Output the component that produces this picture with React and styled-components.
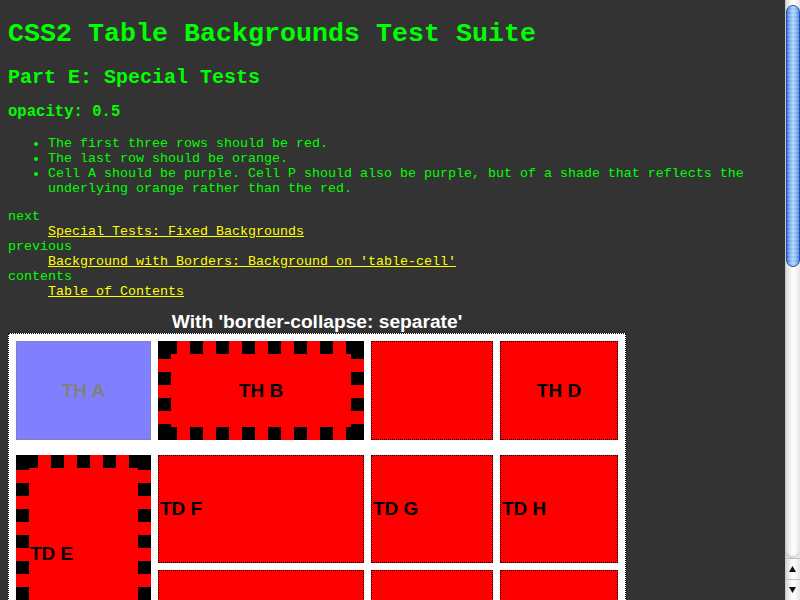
import React from "react";
import styled, { createGlobalStyle } from "styled-components";

const Global = createGlobalStyle`
    html, body {
        margin: 0;
        padding: 0;
        background: #333333;
        overflow: hidden;
    }
`;

const Screen = styled.div`
    display: flex;
    width: 800px;
    height: 600px;
`;

const Page = styled.div`
    flex: 1;
    overflow: hidden;
    padding: 0 8px;
    color: #00ff00;
    font-family: "Liberation Mono", "Courier New", monospace;
    font-size: 13.33px;
    line-height: 15px;
`;

const Title = styled.h1`
    margin: 19px 0 16.5px;
    font-size: 26.67px;
    line-height: 30px;
    font-weight: bold;
`;

const Part = styled.h2`
    margin: 0 0 14.5px;
    font-size: 20px;
    line-height: 23px;
    font-weight: bold;
`;

const Sub = styled.h3`
    margin: 0 0 14.5px;
    font-size: 15.6px;
    line-height: 18px;
    font-weight: bold;
`;

const Notes = styled.ul`
    margin: 0 0 13px;
    padding-left: 40px;
    li {
        list-style: disc;
    }
`;

const Nav = styled.dl`
    margin: 0 0 12.5px;
    dt {
        margin: 0;
    }
    dd {
        margin: 0 0 0 40px;
    }
    a {
        color: #ffff00;
        text-decoration: underline;
    }
`;

const TableWrap = styled.div`
    width: 618px;
    font-family: "Liberation Sans", Arial, sans-serif;
`;

const Caption = styled.div`
    color: #ffffff;
    font-weight: bold;
    font-size: 19.2px;
    line-height: 22px;
    text-align: center;
`;

const Table = styled.div`
    display: flex;
    flex-direction: column;
    gap: 15px;
    border: 1px dotted #000;
    background: #ffffff;
    padding: 7px;
`;

const Section = styled.div`
    display: grid;
    grid-template-columns: 135px 206px 122px 118px;
    grid-template-rows: ${(p) => p.$rows};
    gap: 7px;
`;

const Cell = styled.div`
    display: flex;
    align-items: center;
    justify-content: ${(p) => (p.$head ? "center" : "flex-start")};
    box-sizing: border-box;
    padding: 1px;
    border: 1px dotted ${(p) => p.$line || "#000"};
    background: ${(p) => p.$bg || "#ff0000"};
    color: ${(p) => p.$ink || "#000"};
    font-weight: bold;
    font-size: 19px;
    line-height: 22px;
    grid-row: ${(p) => p.$row || "auto"};
    grid-column: ${(p) => p.$col || "auto"};
`;

const band = (dir, o) =>
    `repeating-linear-gradient(${dir}, #000 ${o}px ${o + 13}px, transparent ${o + 13}px ${o + 26}px)`;

const DashedCell = styled(Cell)`
    border: none;
    padding: 14px;
    background:
        linear-gradient(#000, #000) left top / 13px 13px no-repeat,
        linear-gradient(#000, #000) right top / 13px 13px no-repeat,
        linear-gradient(#000, #000) left bottom / 13px 13px no-repeat,
        linear-gradient(#000, #000) right bottom / 13px 13px no-repeat,
        ${(p) => band("to right", p.$ox)} left top / 100% 13px no-repeat,
        ${(p) => band("to right", p.$ox)} left bottom / 100% 13px no-repeat,
        ${(p) => band("to bottom", p.$oy)} left top / 13px 100% no-repeat,
        ${(p) => band("to bottom", p.$oy)} right top / 13px 100% no-repeat,
        #ff0000;
`;

const Scrollbar = styled.div`
    width: 15px;
    display: flex;
    flex-direction: column;
    background: linear-gradient(to right, #b9b9b9 0, #d9d9d9 1px, #f2f2f2 35%, #ffffff 60%, #e6e6e6 100%);
`;

const Track = styled.div`
    flex: 1;
    padding-top: 5px;
    border-bottom-left-radius: 7px;
    border-bottom-right-radius: 7px;
    box-shadow: inset 0 -3px 3px -2px rgba(0, 0, 0, 0.25);
`;

const Thumb = styled.div`
    height: 262px;
    margin: 0 0 0 1px;
    border: 1px solid #1f4fb8;
    border-radius: 7px;
    box-sizing: border-box;
    background:
        repeating-linear-gradient(to bottom, rgba(255, 255, 255, 0.12) 0 2px, rgba(0, 0, 0, 0.03) 2px 4px),
        linear-gradient(to right, #3b72d6 0%, #79adf2 22%, #b4d7fb 50%, #8cbdf6 75%, #4f86de 100%);
`;

const ArrowButton = styled.div`
    height: 20px;
    display: flex;
    align-items: center;
    justify-content: center;
    border-top: 1px solid ${(p) => (p.$first ? "#bcbcbc" : "#c8c8c8")};
`;

const Arrow = ({ up }) => (
    <svg width="7" height="6" viewBox="0 0 7 6">
        <polygon points={up ? "3.5,0 7,6 0,6" : "0,0 7,0 3.5,6"} fill="#111" />
    </svg>
);

const App = () => {
    return (
        <Screen>
            <Global />
            <Page>
                <Title>CSS2 Table Backgrounds Test Suite</Title>
                <Part>Part E: Special Tests</Part>
                <Sub>opacity: 0.5</Sub>
                <Notes>
                    <li>The first three rows should be red.</li>
                    <li>The last row should be orange.</li>
                    <li>
                        Cell A should be purple. Cell P should also be purple, but of a shade that reflects the
                        underlying orange rather than the red.
                    </li>
                </Notes>
                <Nav>
                    <dt>next</dt>
                    <dd><a href="#f">Special Tests: Fixed Backgrounds</a></dd>
                    <dt>previous</dt>
                    <dd><a href="#d">Background with Borders: Background on 'table-cell'</a></dd>
                    <dt>contents</dt>
                    <dd><a href="#toc">Table of Contents</a></dd>
                </Nav>
                <TableWrap>
                    <Caption>With 'border-collapse: separate'</Caption>
                    <Table>
                        <Section $rows="99px">
                            <Cell $head $bg="#8080ff" $line="#808080" $ink="#808080">TH A</Cell>
                            <DashedCell $head $ox={6} $oy={5}>TH B</DashedCell>
                            <Cell $head></Cell>
                            <Cell $head>TH D</Cell>
                        </Section>
                        <Section $rows="108px 83px 83px">
                            <DashedCell $row="1 / 3" $col="1" $ox={9} $oy={2}>TD E</DashedCell>
                            <Cell>TD F</Cell>
                            <Cell>TD G</Cell>
                            <Cell>TD H</Cell>
                            <Cell $col="2"></Cell>
                            <Cell></Cell>
                            <Cell></Cell>
                            <Cell $bg="#ffa500"></Cell>
                            <Cell $bg="#ffa500"></Cell>
                            <Cell $bg="#ffa500"></Cell>
                            <Cell $bg="#ffa500"></Cell>
                        </Section>
                    </Table>
                </TableWrap>
            </Page>
            <Scrollbar>
                <Track>
                    <Thumb />
                </Track>
                <ArrowButton $first><Arrow up /></ArrowButton>
                <ArrowButton><Arrow /></ArrowButton>
            </Scrollbar>
        </Screen>
    );
};

export default App;
